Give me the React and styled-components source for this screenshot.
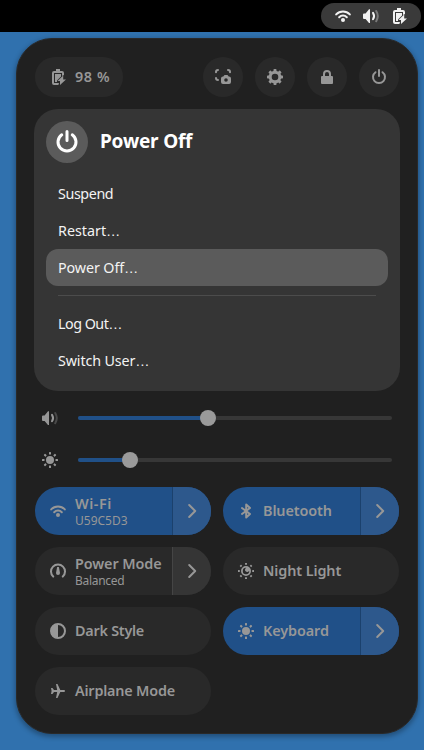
import React from "react";
import styled, { createGlobalStyle } from "styled-components";

const Global = createGlobalStyle`
  *, *::before, *::after { box-sizing: border-box; }
  html, body, #root { height: 100%; }
  body {
    margin: 0;
    overflow: hidden;
    background: #3071ae;
    font-family: "Noto Sans", "Open Sans", sans-serif;
    font-size: 14px;
  }
  button {
    border: 0;
    padding: 0;
    font: inherit;
    color: inherit;
    background: none;
  }
`;

const Desktop = styled.div`
  display: flex;
  flex-direction: column;
  width: 424px;
  height: 750px;
  background: #3071ae;
`;

const TopBar = styled.header`
  display: flex;
  justify-content: flex-end;
  flex: none;
  height: 32px;
  padding: 3px 3px 3px 0;
  background: #000;
`;

const StatusPill = styled.div`
  display: flex;
  align-items: center;
  gap: 12px;
  width: 100px;
  padding-left: 14px;
  border-radius: 13px;
  background: #3a3a3a;
  color: #f2f2f2;

  & > :last-child { margin-left: 1px; }
`;

const Panel = styled.main`
  width: 402px;
  height: 696px;
  margin: 6px 0 0 16px;
  padding: 18px 18px 0;
  border: 1px solid #292929;
  border-radius: 36px;
  background: #202020;
  color: #979797;
  box-shadow: 0 2px 5px 1px rgba(0, 0, 0, 0.3);
`;

const Toolbar = styled.div`
  display: flex;
  gap: 12px;
  height: 40px;
`;

const BatteryButton = styled.button`
  display: flex;
  align-items: center;
  gap: 8px;
  width: 88px;
  height: 40px;
  margin-right: auto;
  padding-left: 16px;
  border-radius: 20px;
  background: #292929;
`;

const RoundButton = styled.button`
  display: grid;
  place-items: center;
  width: 40px;
  height: 40px;
  border-radius: 50%;
  background: #292929;
`;

const ButtonText = styled.span`
  font-size: 14.400px;
  font-weight: 600;
  letter-spacing: ${(p) => p.$track || 0}px;
  word-spacing: ${(p) => p.$wordGap || 0}px;
  line-height: 20px;
  white-space: nowrap;
`;

const Subtitle = styled.span`
  margin-top: -1px;
  font-size: 12px;
  letter-spacing: ${(p) => p.$track || 0}px;
  line-height: 16px;
  white-space: nowrap;
`;

const Menu = styled.section`
  width: 366px;
  height: 282px;
  margin: 12px -1px 0;
  padding: 12px;
  border-radius: 24px;
  background: #353535;
  color: #f3f3f3;
`;

const MenuHeader = styled.div`
  display: flex;
  align-items: center;
  gap: 12px;
  height: 42px;
  margin-bottom: 12px;
  color: #fff;
`;

const HeaderIcon = styled.div`
  display: grid;
  place-items: center;
  width: 42px;
  height: 42px;
  border-radius: 50%;
  background: #5b5b5b;
`;

const MenuTitle = styled.h2`
  margin: 0;
  padding-bottom: 3px;
  font-size: 19px;
  font-weight: 700;
  letter-spacing: -0.200px;
  line-height: 26px;
`;

const MenuItemBox = styled.button`
  display: flex;
  align-items: center;
  width: 100%;
  height: 37px;
  padding: 0 12px;
  border-radius: 12px;
  background: ${(p) => (p.$active ? "#5b5b5b" : "transparent")};
`;

const MenuText = styled.span`
  font-size: 14.300px;
  letter-spacing: ${(p) => p.$track}px;
  line-height: 20px;
  white-space: nowrap;
`;

const Ellipsis = styled.span`
  font-family: "Liberation Sans", sans-serif;
  letter-spacing: 0;
`;

const Separator = styled.hr`
  height: 1px;
  margin: 9px 12px 9px;
  border: 0;
  background: #4c4c4c;
`;

const Sliders = styled.div`
  display: flex;
  flex-direction: column;
  gap: 26px;
  padding: 19px 7px 19px;
`;

const SliderRow = styled.div`
  display: flex;
  align-items: center;
  gap: 20px;
  height: 16px;
`;

const Track = styled.div`
  display: flex;
  align-items: center;
  flex: 1;
  height: 4px;
  border-radius: 2px;
  background: #373737;
`;

const Fill = styled.div`
  flex: none;
  height: 4px;
  border-radius: 2px;
  background: #205088;
`;

const Knob = styled.div`
  flex: none;
  width: 16px;
  height: 16px;
  margin-left: -8px;
  border-radius: 50%;
  background: #9a9a9a;
`;

const Tiles = styled.div`
  display: grid;
  grid-template-columns: 176px 176px;
  grid-auto-rows: 48px;
  gap: 12px;
`;

const TileBox = styled.div`
  display: flex;
  overflow: hidden;
  border-radius: 24px;
  background: ${(p) => (p.$on ? "#205088" : "#292929")};
`;

const TileMain = styled.button`
  display: flex;
  align-items: center;
  flex: 1;
  gap: 9px;
  padding-left: 15px;
  text-align: left;
`;

const TileText = styled.div`
  display: flex;
  flex-direction: column;
  padding-top: ${(p) => (p.$stacked ? 1 : 0)}px;
`;

const TileArrow = styled.button`
  display: grid;
  place-items: center;
  width: 39px;
  border-left: 1px solid ${(p) => (p.$on ? "#1b416d" : "#454545")};
  background: ${(p) => (p.$on ? "#2d588c" : "#353535")};
`;

const Glyph = styled.svg`
  display: block;
  flex: none;
  width: ${(p) => p.$size || 16}px;
  height: ${(p) => p.$size || 16}px;
  fill: currentColor;
`;

const Line = styled.g`
  fill: none;
  stroke: currentColor;
  stroke-width: ${(p) => p.$width || 2};
`;

const rays = [0, 45, 90, 135, 180, 225, 270, 315];

const glyphs = {
  wifi: (
    <>
      <Line strokeLinecap="round">
        <path d="M1.2 6.4A9.3 9.3 0 0 1 14.8 6.4M4.2 9.2a5.3 5.3 0 0 1 7.6 0" />
      </Line>
      <circle cx="8" cy="12" r="2" />
    </>
  ),
  volume: (
    <>
      <path d="M0 6.400A1 1 0 0 1 1 5.400H2.600L6 1.200H7V15H6L2.600 10.900H1a1 1 0 0 1-1-1z" />
      <Line strokeLinecap="round">
        <path d="M10 4.900q2.200 3.200 0 6.400" />
        <path d="M13.200 3q3.200 5.100 0 10.200" opacity=".35" />
      </Line>
    </>
  ),
  battery: (
    <>
      <path d="M5 0h4v2h2a2 2 0 0 1 2 2v2l-2 1V4H3v10h5l-.6 2H3a2 2 0 0 1-2-2V4a2 2 0 0 1 2-2h2z" />
      <path d="M4 5h6v2.500L6 11.500V13H4z" />
      <path d="M12.200 6.600v4H15L9 16v-4H6.500z" />
    </>
  ),
  screenshot: (
    <>
      <Line strokeLinecap="round" strokeLinejoin="round">
        <path d="M1 3.200V3a2 2 0 0 1 2-2M13 1a2 2 0 0 1 2 2v.2M1 9a2 2 0 0 0 2 2" />
      </Line>
      <path fillRule="evenodd" d="M9.500 6h3l1.200 1.500H14a2 2 0 0 1 2 2V13a2 2 0 0 1-2 2H8a2 2 0 0 1-2-2V9.500a2 2 0 0 1 2-2h.3zM11 9.200a1.800 1.800 0 1 0 0 3.600 1.800 1.800 0 0 0 0-3.600z" />
    </>
  ),
  gear: (
    <>
      <Line $width={3}>
        <circle cx="8" cy="8" r="4.800" />
      </Line>
      {rays.map((a) => (
        <rect key={a} x="6.500" y="0" width="3" height="3" rx=".7" transform={`rotate(${a} 8 8)`} />
      ))}
    </>
  ),
  lock: (
    <>
      <rect x="2" y="7" width="12" height="8" rx="1" />
      <Line>
        <path d="M5 8V5a3 3 0 0 1 6 0v3" />
      </Line>
    </>
  ),
  power: (
    <Line strokeLinecap="round">
      <path d="M8 1v6M4.500 3.200a6 6 0 1 0 7 0" />
    </Line>
  ),
  sun: (
    <>
      <circle cx="8" cy="8" r="4" />
      {rays.map((a) => (
        <rect key={a} x="7" y="0" width="2" height="2.500" rx=".5" transform={`rotate(${a} 8 8)`} />
      ))}
    </>
  ),
  night: (
    <>
      <path fillRule="evenodd" d="M8 3a5 5 0 1 0 0 10A5 5 0 0 0 8 3zM8.300 4.800a2.200 2.200 0 1 0 2.900 2.900A3.200 3.200 0 1 1 8.300 4.800z" />
      {rays.map((a) => (
        <rect key={a} x="7" y="0" width="2" height="1.800" rx=".3" transform={`rotate(${a} 8 8)`} />
      ))}
    </>
  ),
  bluetooth: (
    <Line strokeLinejoin="round" strokeLinecap="round">
      <path d="M4 5l8 6-3.800 3.500v-13L12 5l-8 6" />
    </Line>
  ),
  speed: (
    <>
      <Line strokeLinecap="round">
        <path d="M3.200 13.600a7 7 0 1 1 9.600 0" />
      </Line>
      <path d="M7.100 4h1.800l1.100 6a2 2 0 1 1-4 0z" />
    </>
  ),
  dark: (
    <>
      <Line>
        <circle cx="8" cy="8" r="7" />
      </Line>
      <path d="M8 1v14A7 7 0 0 1 8 1z" />
    </>
  ),
  plane: (
    <path d="M6 1h1.500l2.800 6H14a1 1 0 0 1 0 2h-3.700l-2.800 6H6l1.200-6H4l-1.500 2H1l.6-3L1 5h1.500L4 7h3.200z" />
  ),
  chevron: (
    <Line strokeLinecap="round" strokeLinejoin="round">
      <path d="M5.200 2l6 6-6 6" />
    </Line>
  ),
};

const Icon = ({ name, size }) => (
  <Glyph viewBox="0 0 16 16" $size={size} aria-hidden="true">
    {glyphs[name]}
  </Glyph>
);

const MenuItem = ({ label, more, active, track }) => (
  <MenuItemBox $active={active}>
    <MenuText $track={track}>
      {label}
      {more && <Ellipsis>…</Ellipsis>}
    </MenuText>
  </MenuItemBox>
);

const Slider = ({ icon, value }) => (
  <SliderRow>
    <Icon name={icon} />
    <Track>
      <Fill style={{ width: value }} />
      <Knob />
    </Track>
  </SliderRow>
);

const Tile = ({ icon, title, detail, on, arrow, track, detailTrack }) => (
  <TileBox $on={on}>
    <TileMain>
      <Icon name={icon} />
      <TileText $stacked={Boolean(detail)}>
        <ButtonText $track={track}>{title}</ButtonText>
        {detail && <Subtitle $track={detailTrack}>{detail}</Subtitle>}
      </TileText>
    </TileMain>
    {arrow && (
      <TileArrow $on={on} aria-label={`${title} options`}>
        <Icon name="chevron" />
      </TileArrow>
    )}
  </TileBox>
);

export default function App() {
  return (
    <Desktop>
      <Global />
      <TopBar>
        <StatusPill>
          <Icon name="wifi" />
          <Icon name="volume" />
          <Icon name="battery" />
        </StatusPill>
      </TopBar>
      <Panel>
        <Toolbar>
          <BatteryButton>
            <Icon name="battery" />
            <ButtonText $track={0.4} $wordGap={0.5}>98 %</ButtonText>
          </BatteryButton>
          {["screenshot", "gear", "lock", "power"].map((name) => (
            <RoundButton key={name} aria-label={name}>
              <Icon name={name} />
            </RoundButton>
          ))}
        </Toolbar>
        <Menu>
          <MenuHeader>
            <HeaderIcon>
              <Icon name="power" size={24} />
            </HeaderIcon>
            <MenuTitle>Power Off</MenuTitle>
          </MenuHeader>
          <MenuItem label="Suspend" track={-0.4} />
          <MenuItem label="Restart" more track={0} />
          <MenuItem label="Power Off" more active track={-0.1} />
          <Separator />
          <MenuItem label="Log Out" more track={-0.5} />
          <MenuItem label="Switch User" more track={-0.13} />
        </Menu>
        <Sliders>
          <Slider icon="volume" value="130px" />
          <Slider icon="sun" value="52px" />
        </Sliders>
        <Tiles>
          <Tile icon="wifi" title="Wi-Fi" detail="U59C5D3" on arrow track={0.5} />
          <Tile icon="bluetooth" title="Bluetooth" on arrow track={-0.1} />
          <Tile icon="speed" title="Power Mode" detail="Balanced" arrow track={-0.1} detailTrack={-0.3} />
          <Tile icon="night" title="Night Light" track={-0.1} />
          <Tile icon="dark" title="Dark Style" track={-0.25} />
          <Tile icon="sun" title="Keyboard" on arrow track={-0.1} />
          <Tile icon="plane" title="Airplane Mode" track={-0.2} />
        </Tiles>
      </Panel>
    </Desktop>
  );
}
